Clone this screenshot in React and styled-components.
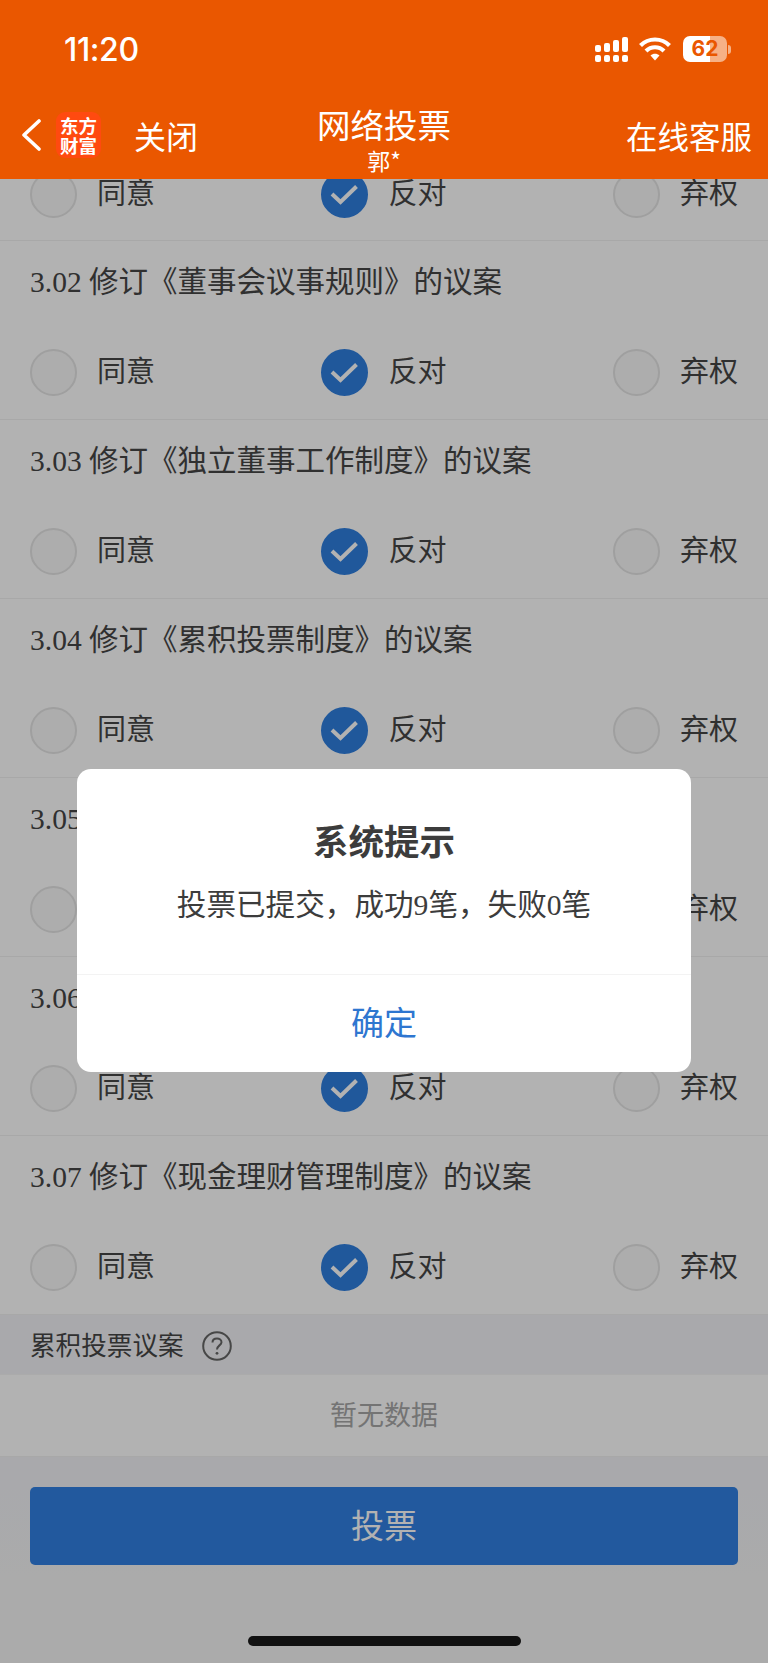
import React from 'react'
import styled, { createGlobalStyle } from 'styled-components'

const GlobalStyle = createGlobalStyle`
  html, body {
    margin: 0;
    padding: 0;
    background: #fff;
  }
  body {
    font-family: "Liberation Serif", "Noto Sans CJK SC", serif;
  }
`

const Screen = styled.div`
  position: relative;
  width: 768px;
  height: 1663px;
  overflow: hidden;
  display: flex;
  flex-direction: column;
  box-sizing: border-box;
`

const Header = styled.header`
  position: relative;
  z-index: 2;
  flex: none;
  height: 179px;
  background: #ea5700;
  color: #fff;
  font-family: "Noto Sans CJK SC", sans-serif;
`

const StatusBar = styled.div`
  height: 98px;
  box-sizing: border-box;
  padding: 0 37px 0 64px;
  display: flex;
  align-items: center;
  justify-content: space-between;
`

const Time = styled.span`
  font-family: Inter, "Liberation Sans", sans-serif;
  font-size: 32px;
  font-weight: 500;
  letter-spacing: -0.4px;
`

const StatusIcons = styled.div`
  display: flex;
  align-items: center;
`

const Battery = styled.div`
  width: 44px;
  height: 26px;
  margin-left: 12px;
  border-radius: 7px;
  background: linear-gradient(90deg, #fff 0 61%, #f6b186 61% 100%);
  color: #ea5700;
  font-family: Inter, "Liberation Sans", sans-serif;
  font-size: 21px;
  font-weight: 700;
  line-height: 26px;
  text-align: center;
`

const BatteryNub = styled.div`
  width: 3px;
  height: 9px;
  margin-left: 1px;
  border-radius: 0 3px 3px 0;
  background: #f6b186;
`

const NavBar = styled.nav`
  height: 81px;
  padding: 0 16px;
  display: grid;
  grid-template-columns: 1fr auto 1fr;
`

const NavLeft = styled.div`
  display: flex;
  align-items: center;
  padding-bottom: 8px;
`

const BackSlot = styled.span`
  display: flex;
  margin-left: 5px;
`

const Logo = styled.div`
  width: 45px;
  height: 46px;
  margin-left: 15px;
  border-radius: 9px;
  background: #ff4a10;
  font-size: 18.5px;
  font-weight: 700;
  line-height: 20px;
  text-align: center;
  display: flex;
  flex-direction: column;
  justify-content: center;
`

const NavLink = styled.span`
  margin-left: ${(props) => props.offset || 0}px;
  font-size: ${(props) => props.size || 32}px;
  line-height: 44px;
`

const NavRight = styled(NavLeft)`
  justify-content: flex-end;
`

const NavCenter = styled.div`
  padding-top: 4px;
  text-align: center;
`

const NavTitle = styled.div`
  font-size: 33.5px;
  line-height: 44px;
`

const NavSub = styled.div`
  font-size: 23px;
  line-height: 29px;
`

const Body = styled.main`
  position: relative;
  flex: 1;
  min-height: 0;
  overflow: hidden;
  background: #f5f5f5;
`

const Row = styled.section`
  height: 179px;
  box-sizing: border-box;
  background: #fff;
  border-bottom: 1px solid #f1f1f1;
`

const ClippedRow = styled(Row)`
  height: 93px;
  margin-top: -31px;
`

const RowTitle = styled.div`
  height: 82px;
  padding: 0 30px;
  font-size: 29.5px;
  line-height: 82px;
  color: #464646;
`

const Options = styled.div`
  height: 92px;
  margin-top: ${(props) => (props.flush ? -1 : 3)}px;
  padding: 0 30px;
  display: flex;
  align-items: center;
  justify-content: space-between;
`

const Option = styled.label`
  display: flex;
  align-items: center;
  gap: 20px;
  font-size: 29px;
  color: #464646;
`

const OptionText = styled.span`
  padding-bottom: 7px;
`

const Radio = styled.span`
  width: 47px;
  height: 47px;
  box-sizing: border-box;
  border-radius: 50%;
  border: 2px solid ${(props) => (props.checked ? '#2f7fdf' : '#e4e4e4')};
  background: ${(props) => (props.checked ? '#2f7fdf' : '#f8f8f8')};
  display: flex;
  align-items: center;
  justify-content: center;
`

const SectionHead = styled.div`
  height: 60px;
  box-sizing: border-box;
  padding: 0 30px 2px;
  display: flex;
  align-items: center;
  gap: 18px;
  background: #f2f3f6;
  border-bottom: 1px solid #f5f5f5;
  font-size: 25.6px;
  color: #464646;
`

const HelpSlot = styled.span`
  display: flex;
  margin-top: 4px;
`

const Empty = styled.div`
  height: 82px;
  box-sizing: border-box;
  background: #fff;
  border-bottom: 1px solid #f1f1f1;
  font-size: 27px;
  line-height: 82px;
  text-align: center;
  color: #a6a6a6;
`

const Footer = styled.div`
  height: 207px;
  box-sizing: border-box;
  padding: 30px 30px 0;
  background: linear-gradient(#f2f3f6 0, #f2f3f6 30px, #f5f5f5 120px);
`

const VoteButton = styled.button`
  display: block;
  width: 100%;
  height: 78px;
  padding: 0 0 4px;
  border: 0;
  border-radius: 5px;
  background: #3180e2;
  color: #fff;
  font-family: "Noto Sans CJK SC", sans-serif;
  font-size: 33px;
`

const Overlay = styled.div`
  position: absolute;
  inset: 0;
  background: rgba(0, 0, 0, 0.3);
  display: flex;
  align-items: center;
  justify-content: center;
`

const Modal = styled.div`
  width: 614px;
  height: 303px;
  margin-top: -1px;
  border-radius: 14px;
  background: #fff;
  display: flex;
  flex-direction: column;
`

const ModalBody = styled.div`
  height: 206px;
  padding-top: 46px;
  box-sizing: border-box;
  border-bottom: 1px solid #f3f3f3;
  text-align: center;
  color: #3c3c3c;
`

const ModalTitle = styled.div`
  font-family: "Noto Sans CJK SC", sans-serif;
  font-size: 35.5px;
  font-weight: 700;
  line-height: 50px;
`

const ModalText = styled.div`
  margin-top: 15px;
  font-size: 29.6px;
  line-height: 50px;
`

const ModalAction = styled.div`
  flex: 1;
  padding-bottom: 5px;
  display: flex;
  align-items: center;
  justify-content: center;
  font-family: "Noto Sans CJK SC", sans-serif;
  font-size: 33px;
  color: #2e76d0;
`

const HomeBar = styled.div`
  position: absolute;
  left: 248px;
  bottom: 17px;
  z-index: 3;
  width: 273px;
  height: 10px;
  border-radius: 5px;
  background: #111;
`

const SignalIcon = () => (
  <svg width="34" height="25" viewBox="0 0 34 25" fill="#fff">
    <rect x="0" y="18" width="6" height="7" rx="2" />
    <rect x="9" y="18" width="6" height="7" rx="2" />
    <rect x="18" y="18" width="6" height="7" rx="2" />
    <rect x="27" y="18" width="6" height="7" rx="2" />
    <rect x="0" y="8" width="6" height="7" rx="2" />
    <rect x="9" y="6" width="6" height="9" rx="2" />
    <rect x="18" y="3" width="6" height="12" rx="2" />
    <rect x="27" y="0" width="6" height="15" rx="2" />
  </svg>
)

const WifiIcon = () => (
  <svg width="32" height="24" viewBox="0 0 32 24" style={{ marginLeft: 10 }}>
    <g fill="none" stroke="#fff" strokeWidth="4.2">
      <path d="M1.5 8.5C9.5 0.5 22.5 0.5 30.5 8.5" />
      <path d="M7 14C12 9 20 9 25 14" />
    </g>
    <path d="M11.5 18.5C14 16 18 16 20.5 18.5L16 23.5Z" fill="#fff" />
  </svg>
)

const BackIcon = () => (
  <svg width="20" height="32" viewBox="0 0 20 32">
    <path d="M18 2L3 16L18 30" fill="none" stroke="#fff" strokeWidth="3.6" strokeLinecap="round" strokeLinejoin="round" />
  </svg>
)

const CheckIcon = () => (
  <svg width="29" height="21" viewBox="0 0 29 21">
    <path d="M2 10L10.5 18L26.5 2.5" fill="none" stroke="#fff" strokeWidth="4" />
  </svg>
)

const HelpIcon = () => (
  <svg width="30" height="30" viewBox="0 0 30 30">
    <circle cx="15" cy="15" r="13.8" fill="none" stroke="#666" strokeWidth="2" />
    <path d="M10.5 11.5C10.5 8.8 12.6 7.4 15 7.4C17.5 7.4 19.5 8.9 19.5 11.2C19.5 14.3 15 14.6 15 18.5" fill="none" stroke="#666" strokeWidth="2" />
    <circle cx="15" cy="22.3" r="1.4" fill="#666" />
  </svg>
)

const CHOICES = [
  { id: 'agree', text: '同意' },
  { id: 'against', text: '反对' },
  { id: 'abstain', text: '弃权' },
]

const PROPOSALS = [
  '3.02 修订《董事会议事规则》的议案',
  '3.03 修订《独立董事工作制度》的议案',
  '3.04 修订《累积投票制度》的议案',
  '3.05 修订《对外担保管理制度》的议案',
  '3.06 修订《关联交易管理制度》的议案',
  '3.07 修订《现金理财管理制度》的议案',
]

const Choices = ({ flush }) => (
  <Options flush={flush}>
    {CHOICES.map((choice) => (
      <Option key={choice.id}>
        <Radio checked={choice.id === 'against'}>
          {choice.id === 'against' && <CheckIcon />}
        </Radio>
        <OptionText>{choice.text}</OptionText>
      </Option>
    ))}
  </Options>
)

export default function App() {
  return (
    <Screen>
      <GlobalStyle />
      <Header>
        <StatusBar>
          <Time>11:20</Time>
          <StatusIcons>
            <SignalIcon />
            <WifiIcon />
            <Battery>62</Battery>
            <BatteryNub />
          </StatusIcons>
        </StatusBar>
        <NavBar>
          <NavLeft>
            <BackSlot>
              <BackIcon />
            </BackSlot>
            <Logo>
              <span>东方</span>
              <span>财富</span>
            </Logo>
            <NavLink offset={33}>关闭</NavLink>
          </NavLeft>
          <NavCenter>
            <NavTitle>网络投票</NavTitle>
            <NavSub>郭*</NavSub>
          </NavCenter>
          <NavRight>
            <NavLink size={31.5}>在线客服</NavLink>
          </NavRight>
        </NavBar>
      </Header>
      <Body>
        <ClippedRow>
          <Choices flush />
        </ClippedRow>
        {PROPOSALS.map((title) => (
          <Row key={title}>
            <RowTitle>{title}</RowTitle>
            <Choices />
          </Row>
        ))}
        <SectionHead>
          累积投票议案
          <HelpSlot>
            <HelpIcon />
          </HelpSlot>
        </SectionHead>
        <Empty>暂无数据</Empty>
        <Footer>
          <VoteButton>投票</VoteButton>
        </Footer>
        <Overlay>
          <Modal>
            <ModalBody>
              <ModalTitle>系统提示</ModalTitle>
              <ModalText>投票已提交，成功9笔，失败0笔</ModalText>
            </ModalBody>
            <ModalAction>确定</ModalAction>
          </Modal>
        </Overlay>
      </Body>
      <HomeBar />
    </Screen>
  )
}
